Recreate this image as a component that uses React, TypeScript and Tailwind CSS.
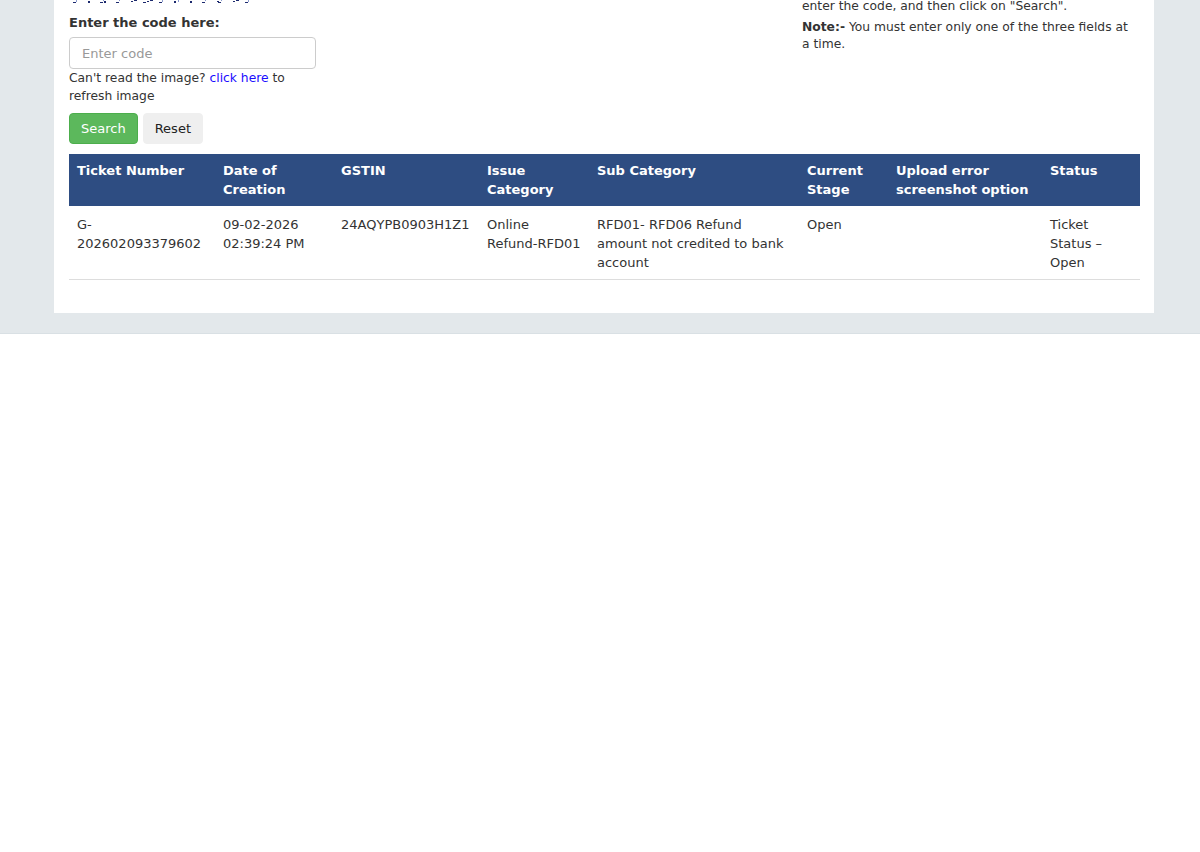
import React from "react";

type Ticket = {
  number: React.ReactNode;
  created: React.ReactNode;
  gstin: string;
  category: React.ReactNode;
  subCategory: string;
  stage: string;
  upload: string;
  status: string;
};

const columns: { label: React.ReactNode; width: string }[] = [
  { label: "Ticket Number", width: "w-[146px]" },
  { label: "Date of Creation", width: "w-[118px]" },
  { label: "GSTIN", width: "w-[146px]" },
  { label: "Issue Category", width: "w-[110px]" },
  { label: "Sub Category", width: "w-[210px]" },
  { label: "Current Stage", width: "w-[89px]" },
  { label: "Upload error screenshot option", width: "w-[154px]" },
  { label: "Status", width: "w-[98px]" },
];

const tickets: Ticket[] = [
  {
    number: (
      <>
        G-
        <wbr />
        202602093379602
      </>
    ),
    created: (
      <>
        09-02-2026
        <br />
        02:39:24 PM
      </>
    ),
    gstin: "24AQYPB0903H1Z1",
    category: (
      <>
        Online <span className="whitespace-nowrap">Refund-RFD01</span>
      </>
    ),
    subCategory: "RFD01- RFD06 Refund amount not credited to bank account",
    stage: "Open",
    upload: "",
    status: "Ticket Status – Open",
  },
];

// Noise strip of the captcha image (deterministic so it renders the same every time)
function Captcha() {
  const dots = Array.from({ length: 70 }, (_, i) => ({
    x: (i * 37) % 188,
    y: 31 + ((i * 13) % 9),
    w: 1 + (i % 3),
    h: 1 + ((i * 7) % 2),
  }));
  return (
    <svg width="190" height="40" viewBox="0 0 190 40" className="block">
      <rect width="190" height="40" fill="#fff" />
      {dots.map((d, i) => (
        <rect
          key={i}
          x={d.x}
          y={d.y}
          width={d.w}
          height={d.h}
          fill={i % 3 === 0 ? "#8a9ad0" : "#1c2a6e"}
        />
      ))}
    </svg>
  );
}

const cell = "px-[8px] pt-[9px] pb-[7px] align-top leading-[19px]";

export default function App() {
  return (
    <div className="min-h-screen bg-white font-['DejaVu_Sans','Verdana',sans-serif] text-[13px] leading-[18px] text-[#333]">
      <div className="overflow-hidden bg-[#e3e8eb] pb-[20px] border-b border-[#d9e0e4]">
        <div className="ml-[54px] -mt-[37px] w-[1100px] bg-white px-[15px] pb-[33px]">
          <div className="flex items-start">
            {/* Left: captcha + form */}
            <div className="w-[733px]">
              <Captcha />
              <label className="mt-[11px] block font-bold">
                Enter the code here:
              </label>
              <input
                type="text"
                placeholder="Enter code"
                className="mt-[5px] block h-[32px] w-[247px] rounded-[4px] border border-[#ccc] px-[12px] text-[13px] text-[#555] placeholder:text-[#999] outline-none"
              />
              <p className="w-[247px] text-[12.3px]">
                Can't read the image?{" "}
                <a href="#" className="text-[#1a0dff]">
                  click here
                </a>{" "}
                to refresh image
              </p>
              <div className="mt-[8px] flex gap-[5px]">
                <button
                  type="button"
                  className="h-[31px] rounded-[4px] border border-[#4cae4c] bg-[#5cb85c] px-[11px] text-white"
                >
                  Search
                </button>
                <button
                  type="button"
                  className="h-[31px] rounded-[4px] border border-[#efefef] bg-[#efefef] px-[11px] text-[#222]"
                >
                  Reset
                </button>
              </div>
            </div>

            {/* Right: instructions */}
            <div className="flex-1 pt-[34px] text-[12.3px]">
              <p>enter the code, and then click on "Search".</p>
              <p className="mt-[4px] leading-[17px]">
                <b>Note:-</b> You must enter only one of the three fields at a
                time.
              </p>
            </div>
          </div>

          <table className="mt-[10px] w-[1071px] table-fixed border-collapse text-left">
            <colgroup>
              {columns.map((c, i) => (
                <col key={i} className={c.width} />
              ))}
            </colgroup>
            <thead>
              <tr className="bg-[#2e4d82] text-white">
                {columns.map((c, i) => (
                  <th
                    key={i}
                    className="px-[8px] pt-[7px] pb-[7px] align-top font-bold leading-[19px]"
                  >
                    {c.label}
                  </th>
                ))}
              </tr>
            </thead>
            <tbody>
              {tickets.map((t, i) => (
                <tr key={i} className="border-b border-[#ddd]">
                  <td className={cell}>{t.number}</td>
                  <td className={cell}>{t.created}</td>
                  <td className={cell}>{t.gstin}</td>
                  <td className={cell}>{t.category}</td>
                  <td className={cell}>{t.subCategory}</td>
                  <td className={cell}>{t.stage}</td>
                  <td className={cell}>{t.upload}</td>
                  <td className={cell}>{t.status}</td>
                </tr>
              ))}
            </tbody>
          </table>
        </div>
      </div>
    </div>
  );
}
